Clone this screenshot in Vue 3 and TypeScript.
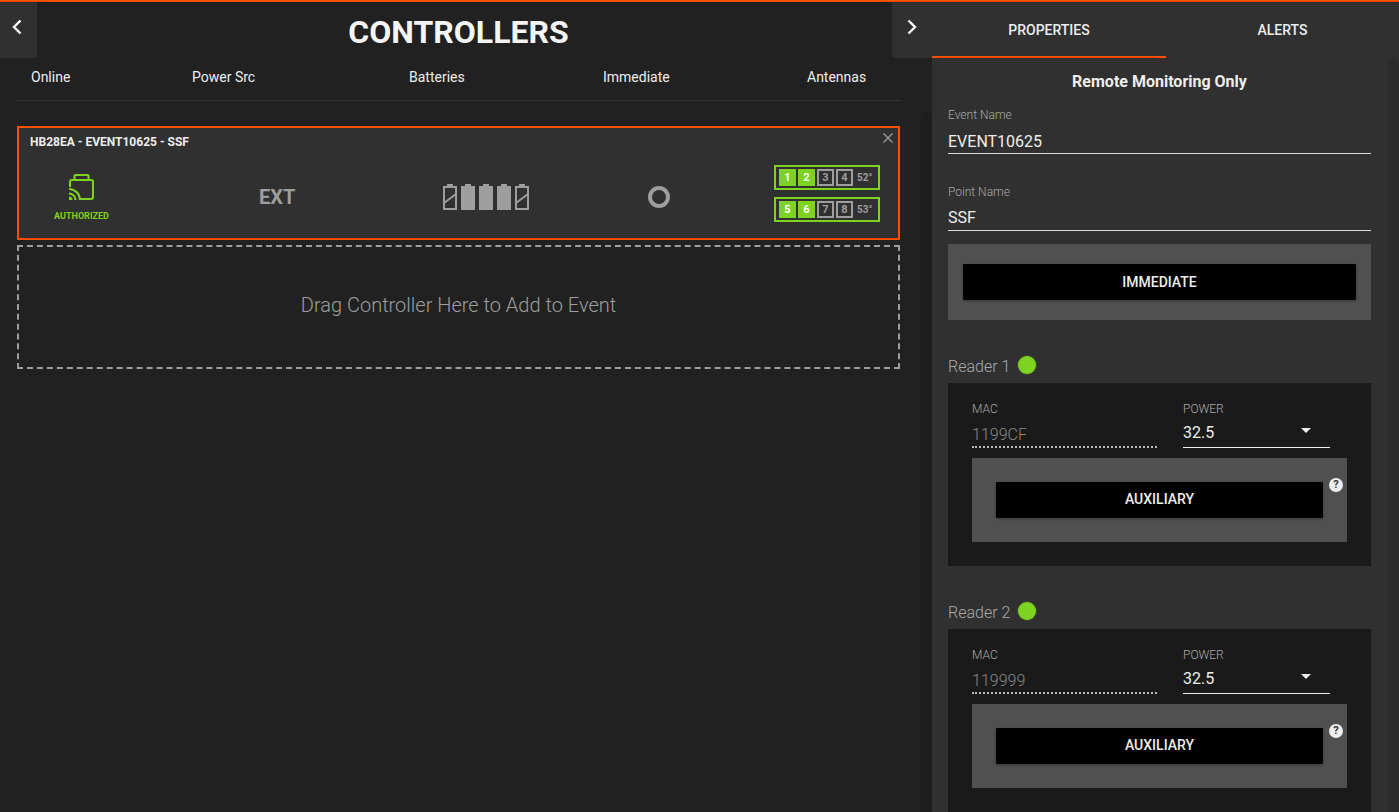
<script setup lang="ts">
const columns = ['Online', 'Power Src', 'Batteries', 'Immediate', 'Antennas']
const batteries = [false, true, true, true, false]
const antennaRows = [
  { temp: '52°', ports: [{ n: 1, on: true }, { n: 2, on: true }, { n: 3, on: false }, { n: 4, on: false }] },
  { temp: '53°', ports: [{ n: 5, on: true }, { n: 6, on: true }, { n: 7, on: false }, { n: 8, on: false }] },
]
const readers = [
  { name: 'Reader 1', mac: '1199CF', power: '32.5' },
  { name: 'Reader 2', mac: '119999', power: '32.5' },
]
</script>

<template>
  <div class="app">
    <main class="left">
      <button class="corner corner-left" aria-label="Back">
        <svg width="12" height="16" viewBox="0 0 12 16"><path d="M9.5 1.5 3 8l6.5 6.5" fill="none" stroke="#fff" stroke-width="2.4" /></svg>
      </button>
      <h1 class="title">CONTROLLERS</h1>
      <div class="columns">
        <span v-for="c in columns" :key="c">{{ c }}</span>
      </div>
      <section class="card">
        <div class="card-title">HB28EA - EVENT10625 - SSF</div>
        <svg class="close" width="10" height="10" viewBox="0 0 10 10"><path d="M.5.5l9 9M9.5.5l-9 9" stroke="#a0a0a0" stroke-width="1.2" fill="none" /></svg>
        <div class="card-body">
          <div class="auth">
            <svg width="25" height="27" viewBox="0 0 25 27" fill="none">
              <path d="M1 13V8a2 2 0 0 1 2-2h19a2 2 0 0 1 2 2v15a2 2 0 0 1-2 2H12" stroke="#7ed321" stroke-width="2" />
              <path d="M5.5 6V2a1 1 0 0 1 1-1h12a1 1 0 0 1 1 1v4" stroke="#7ed321" stroke-width="2" />
              <path d="M0 15a11 11 0 0 1 11 11M0 19.5A6.5 6.5 0 0 1 6.5 26" stroke="#7ed321" stroke-width="2" />
              <path d="M0 22.5A3.5 3.5 0 0 1 3.5 26H0z" fill="#7ed321" />
            </svg>
            <span>AUTHORIZED</span>
          </div>
          <div class="ext">EXT</div>
          <div class="batteries">
            <svg v-for="(full, i) in batteries" :key="i" width="14" height="26" viewBox="0 0 14 26">
              <rect x="4" y="0" width="6" height="2" fill="#9e9e9e" />
              <rect v-if="full" x="0" y="2" width="14" height="24" fill="#9e9e9e" />
              <g v-else fill="none" stroke="#9e9e9e">
                <rect x="1" y="3" width="12" height="22" stroke-width="2" />
                <path d="M1 19 13 10" stroke-width="2" />
              </g>
            </svg>
          </div>
          <div class="ring"></div>
          <div class="antennas">
            <div v-for="row in antennaRows" :key="row.temp" class="ant-row">
              <span v-for="p in row.ports" :key="p.n" class="port" :class="{ on: p.on }">{{ p.n }}</span>
              <span class="temp">{{ row.temp }}</span>
            </div>
          </div>
        </div>
      </section>
      <div class="drop">Drag Controller Here to Add to Event</div>
      <div class="left-track"></div>
    </main>

    <aside class="right">
      <button class="corner corner-right" aria-label="Collapse">
        <svg width="12" height="16" viewBox="0 0 12 16"><path d="M2.5 1.5 9 8l-6.5 6.5" fill="none" stroke="#fff" stroke-width="2.4" /></svg>
      </button>
      <nav class="tabs">
        <div class="tab active">PROPERTIES</div>
        <div class="tab">ALERTS</div>
      </nav>
      <div class="panel">
        <div class="mode">Remote Monitoring Only</div>
        <label class="field">
          <span class="field-label">Event Name</span>
          <span class="field-value">EVENT10625</span>
        </label>
        <label class="field second">
          <span class="field-label">Point Name</span>
          <span class="field-value">SSF</span>
        </label>
        <div class="gray-block top-block">
          <div class="black-btn">IMMEDIATE</div>
        </div>
        <section v-for="r in readers" :key="r.name" class="reader">
          <div class="reader-head">
            <span class="reader-name">{{ r.name }}</span>
            <span class="dot"></span>
          </div>
          <div class="reader-box">
            <div class="reader-fields">
              <div class="mac">
                <span class="mini-label">MAC</span>
                <span class="mac-value">{{ r.mac }}</span>
              </div>
              <div class="power">
                <span class="mini-label">POWER</span>
                <span class="power-value">{{ r.power }}<i class="caret"></i></span>
              </div>
            </div>
            <div class="gray-block aux-block">
              <div class="black-btn aux">AUXILIARY</div>
              <span class="help">?</span>
            </div>
          </div>
        </section>
      </div>
      <div class="right-track"></div>
    </aside>
  </div>
</template>

<style>
html, body { margin: 0; background: #212121; overflow: hidden; }
</style>

<style scoped>
.app {
  display: flex;
  height: 812px;
  box-sizing: border-box;
  border-top: 2px solid #ff4e00;
  overflow: hidden;
  font-family: Roboto, "Liberation Sans", sans-serif;
  color: #fff;
  background: #212121;
}
.left {
  position: relative;
  width: 932px;
  flex: none;
  box-sizing: border-box;
  padding-left: 17px;
  padding-right: 32px;
}
.corner {
  position: absolute;
  top: 0;
  height: 56px;
  width: 37px;
  border: 0;
  padding: 0;
  background: #303030;
  display: flex;
  justify-content: center;
  z-index: 2;
}
.corner svg { margin-top: 17px; }
.corner-left { left: 0; border-bottom-right-radius: 4px; }
.corner-left svg { margin-right: 4px; }
.corner-right { left: -40px; width: 40px; border-bottom-left-radius: 4px; }
.title {
  margin: 0;
  height: 56px;
  line-height: 60px;
  font-size: 32px;
  font-weight: 700;
  text-align: center;
  color: #f5f5f5;
}
.columns {
  display: grid;
  grid-template-columns: 161px 217px 194px 204px auto;
  height: 43px;
  padding: 11px 0 0 14px;
  box-sizing: border-box;
  border-bottom: 1px solid #333;
  font-size: 14px;
  line-height: 17px;
  color: #eee;
  width: 884px;
}
.card {
  position: relative;
  width: 883px;
  height: 114px;
  box-sizing: border-box;
  margin-top: 25px;
  border: 2px solid #ff4e00;
  background: #303030;
}
.card-title {
  position: absolute;
  left: 11px;
  top: 7px;
  font-size: 12px;
  line-height: 14px;
  font-weight: 700;
  color: #eee;
}
.close { position: absolute; right: 5px; top: 5px; }
.card-body { position: relative; height: 100%; }
.auth {
  position: absolute;
  left: 35px;
  top: 46px;
  width: 55px;
  display: flex;
  flex-direction: column;
  align-items: center;
  color: #7ed321;
  font-size: 9px;
  font-weight: 700;
  line-height: 11px;
}
.auth span { margin-top: 10px; white-space: nowrap; }
.ext {
  position: absolute;
  left: 240px;
  top: 57px;
  font-size: 20px;
  font-weight: 700;
  line-height: 24px;
  color: #9e9e9e;
}
.batteries {
  position: absolute;
  left: 424px;
  top: 56px;
  display: flex;
  gap: 4px;
}
.ring {
  position: absolute;
  left: 629px;
  top: 58px;
  width: 22px;
  height: 22px;
  box-sizing: border-box;
  border: 4px solid #9e9e9e;
  border-radius: 50%;
}
.antennas {
  position: absolute;
  left: 755px;
  top: 37px;
  display: flex;
  flex-direction: column;
  gap: 7px;
}
.ant-row {
  display: flex;
  align-items: center;
  width: 106px;
  height: 25px;
  box-sizing: border-box;
  border: 2px solid #7ed321;
  padding-left: 3px;
  gap: 2px;
}
.port {
  width: 17px;
  height: 17px;
  box-sizing: border-box;
  border: 2px solid #9e9e9e;
  font-size: 11px;
  font-weight: 700;
  line-height: 13px;
  text-align: center;
  color: #9e9e9e;
}
.port.on {
  background: #7ed321;
  border-color: #7ed321;
  color: #fff;
}
.temp {
  margin-left: 2px;
  font-size: 10px;
  font-weight: 700;
  color: #9e9e9e;
}
.drop {
  width: 883px;
  height: 124px;
  box-sizing: border-box;
  margin-top: 5px;
  padding-bottom: 4px;
  border: 2px dashed #9e9e9e;
  display: flex;
  align-items: center;
  justify-content: center;
  font-size: 20px;
  font-weight: 300;
  color: #9e9e9e;
}
.left-track {
  position: absolute;
  right: 0;
  top: 110px;
  bottom: 0;
  width: 11px;
  background: #1e1e1e;
  border-radius: 6px 6px 0 0;
}
.right {
  position: relative;
  flex: 1;
  background: #303030;
  min-width: 0;
}
.tabs { display: flex; height: 56px; }
.tab {
  width: 234px;
  height: 56px;
  box-sizing: border-box;
  text-align: center;
  font-size: 14px;
  font-weight: 500;
  line-height: 57px;
  color: #eee;
}
.tab.active { border-bottom: 2px solid #ff4e00; }
.tab + .tab { width: 233px; }
.panel {
  padding: 15px 28px 0 16px;
  height: 754px;
  box-sizing: border-box;
  overflow: hidden;
}
.mode {
  text-align: center;
  font-size: 16px;
  font-weight: 700;
  line-height: 18px;
  color: #eee;
}
.field {
  display: flex;
  flex-direction: column;
  margin-top: 17px;
  height: 46px;
  box-sizing: border-box;
  border-bottom: 1px solid #ddd;
}
.field.second { margin-top: 31px; height: 46px; }
.field-label { font-size: 12px; font-weight: 300; line-height: 14px; color: #aaa; }
.field-value { font-size: 16px; font-weight: 400; line-height: 19px; margin-top: 10px; color: #eee; }
.field.second .field-value { margin-top: 9px; }
.gray-block { background: #505050; box-sizing: border-box; }
.top-block { margin-top: 13px; height: 76px; padding: 20px 15px; }
.black-btn {
  height: 36px;
  background: #000;
  border-radius: 1px;
  text-align: center;
  font-size: 14px;
  font-weight: 500;
  line-height: 36px;
  color: #eee;
  box-shadow: 0 1px 3px rgba(0, 0, 0, .3);
}
.reader-head {
  display: flex;
  align-items: center;
  height: 18px;
  margin-top: 36px;
}
.reader-name { font-size: 16px; font-weight: 300; line-height: 20px; color: #aaa; padding-top: 4px; }
.dot {
  width: 18px;
  height: 18px;
  border-radius: 50%;
  margin-left: 8px;
  background: #7ed321;
  box-shadow: 0 0 2px rgba(126, 211, 33, .5);
}
.reader-box {
  margin-top: 9px;
  height: 183px;
  box-sizing: border-box;
  background: #1a1a1a;
  padding: 19px 24px 0;
}
.reader-fields { display: flex; height: 46px; }
.mac, .power { display: flex; flex-direction: column; box-sizing: border-box; height: 46px; }
.mac { width: 185px; border-bottom: 2px dotted #bbb; }
.power { width: 147px; margin-left: 26px; border-bottom: 1px solid #eee; }
.mini-label { font-size: 12px; font-weight: 300; line-height: 14px; color: #aaa; }
.mac-value { font-size: 16px; font-weight: 300; line-height: 19px; margin-top: 9px; color: #8a8a8a; }
.power-value { position: relative; font-size: 16px; font-weight: 400; line-height: 19px; margin-top: 7px; color: #eee; }
.caret {
  position: absolute;
  right: 19px;
  top: 5px;
  border-left: 5px solid transparent;
  border-right: 5px solid transparent;
  border-top: 5px solid #eee;
}
.aux-block {
  position: relative;
  margin-top: 10px;
  width: 375px;
  height: 84px;
  padding: 24px;
}
.aux { width: 327px; line-height: 35px; }
.help {
  position: absolute;
  right: 4px;
  top: 20px;
  width: 14px;
  height: 14px;
  border-radius: 50%;
  background: #eee;
  color: #333;
  font-size: 11px;
  font-weight: 700;
  line-height: 14px;
  text-align: center;
}
.right-track {
  position: absolute;
  right: 0;
  top: 56px;
  bottom: 0;
  width: 11px;
  background: #2b2b2b;
  border-radius: 6px 6px 0 0;
}
</style>
